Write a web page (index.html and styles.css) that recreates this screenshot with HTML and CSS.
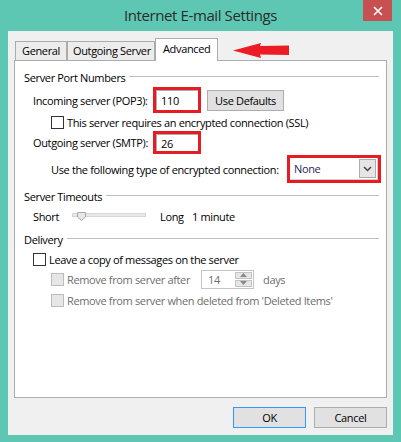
FILE: index.html
```html
<!DOCTYPE html>
<html>
<head>
<meta charset="utf-8">
<link rel="stylesheet" href="styles.css">
</head>
<body>
<div class="window">
  <div class="titlebar">
    <span class="spacer"></span>
    <span class="title">Internet E-mail Settings</span>
    <span class="close-cell">
      <span class="close">
        <svg width="10" height="10" viewBox="0 0 10 10"><path d="M1 1 L9 9 M9 1 L1 9" stroke="#fff" stroke-width="1.6" fill="none"/></svg>
      </span>
    </span>
  </div>
  <div class="body">
    <div class="tabs">
      <div class="tab tab-general">General</div>
      <div class="tab tab-outgoing">Outgoing Server</div>
      <div class="tab tab-active">Advanced</div>
      <svg class="arrow" width="57" height="15" viewBox="0 0 57 15"><polygon points="0,7.5 28,0 27,3 56,2.5 56,12 27,11.5 28,15" fill="#ED1C24"/></svg>
    </div>
    <div class="panel">
      <div class="group-title row-h1"><span>Server Port Numbers</span></div>

      <div class="row row-incoming">
        <span class="label-port">Incoming server (POP3):</span>
        <span class="mark mark-port"><span class="textbox">110</span></span>
        <span class="button btn-defaults">Use Defaults</span>
      </div>

      <div class="row row-ssl">
        <span class="checkbox"></span>
        <span class="cb-label">This server requires an encrypted connection (SSL)</span>
      </div>

      <div class="row row-outgoing">
        <span class="label-port">Outgoing server (SMTP):</span>
        <span class="mark mark-port mark-out"><span class="textbox">26</span></span>
      </div>

      <div class="row row-enc">
        <span class="label-enc">Use the following type of encrypted connection:</span>
        <span class="mark mark-enc">
          <span class="select">
            <span class="select-value">None</span>
            <span class="select-btn"><svg width="9" height="6" viewBox="0 0 9 6"><path d="M1 1 L4.5 4.5 L8 1" stroke="#444" stroke-width="1.5" fill="none"/></svg></span>
          </span>
        </span>
      </div>

      <div class="group-title row-h2"><span>Server Timeouts</span></div>

      <div class="row row-slider">
        <span class="slider-label">Short</span>
        <span class="track"><svg class="thumb" width="9" height="9" viewBox="0 0 9 9"><polygon points="0.5,0.5 8.5,0.5 8.5,5 4.5,8.5 0.5,5" fill="#E7E7E7" stroke="#A7A7A7"/></svg></span>
        <span class="slider-long">Long</span>
        <span>1 minute</span>
      </div>

      <div class="group-title row-h3"><span>Delivery</span></div>

      <div class="row row-leave">
        <span class="checkbox"></span>
        <span class="cb-label">Leave a copy of messages on the server</span>
      </div>

      <div class="row row-remove1 disabled">
        <span class="checkbox"></span>
        <span class="cb-label label-after">Remove from server after</span>
        <span class="spinner">
          <span class="spin-value">14</span>
          <span class="spin-btns">
            <span class="spin-btn"><svg width="7" height="4" viewBox="0 0 7 4"><polygon points="0,4 3.5,0 7,4" fill="#8A8A8A"/></svg></span>
            <span class="spin-btn"><svg width="7" height="4" viewBox="0 0 7 4"><polygon points="0,0 3.5,4 7,0" fill="#8A8A8A"/></svg></span>
          </span>
        </span>
        <span class="days">days</span>
      </div>

      <div class="row row-remove2 disabled">
        <span class="checkbox"></span>
        <span class="cb-label">Remove from server when deleted from 'Deleted Items'</span>
      </div>
    </div>
    <div class="actions">
      <span class="button action-btn btn-ok">OK</span>
      <span class="button action-btn">Cancel</span>
    </div>
  </div>
</div>
</body>
</html>
```

FILE: styles.css
```css
html, body {
  margin: 0;
  padding: 0;
}
body {
  background: #5DC7B3;
  font-family: "Open Sans", "Noto Sans", sans-serif;
  font-size: 11px;
  letter-spacing: -0.35px;
  color: #000;
  white-space: nowrap;
}
.window {
  width: 401px;
  height: 442px;
  display: flex;
  flex-direction: column;
  padding-bottom: 7px;
  box-sizing: border-box;
}
.titlebar {
  height: 31px;
  display: grid;
  grid-template-columns: 1fr auto 1fr;
  align-items: start;
}
.title {
  font-size: 15px;
  color: #2B2B2B;
  line-height: 20px;
  padding-top: 5px;
  letter-spacing: -0.4px;
}
.close-cell {
  justify-self: end;
  margin-right: 9px;
}
.close {
  width: 29px;
  height: 21px;
  background: #C75050;
  display: flex;
  align-items: center;
  justify-content: center;
}
.body {
  flex: 1;
  margin: 0 8px;
  background: #F0F0F0;
  padding: 7px 6px 0 6px;
  display: flex;
  flex-direction: column;
}
.tabs {
  display: flex;
  align-items: flex-end;
  height: 22px;
  padding-left: 1px;
}
.tab {
  height: 19px;
  box-sizing: border-box;
  border: 1px solid #ACACAC;
  border-bottom: none;
  background: #ECECEC;
  line-height: 18px;
  padding: 0 6px;
  flex: none;
}
.tab-general {
  width: 52px;
}
.tab-outgoing {
  width: 88px;
  padding-left: 5px;
}
.tab-active {
  width: 63px;
  height: 23px;
  margin-bottom: -1px;
  background: #fff;
  position: relative;
  z-index: 1;
  line-height: 20px;
  padding: 0 7px;
}
.arrow {
  align-self: center;
  margin-left: 15px;
  margin-top: 2px;
  flex: none;
}
.panel {
  height: 338px;
  box-sizing: border-box;
  border: 1px solid #ACACAC;
  background: #fff;
  padding: 0 7px 0 9px;
  display: flex;
  flex-direction: column;
}
.group-title {
  display: flex;
  align-items: center;
  height: 20px;
}
.group-title::after {
  content: "";
  flex: 1;
  height: 1px;
  background: #BDBDBD;
  margin-left: 4px;
  margin-top: -1px;
}
.row {
  display: flex;
  align-items: center;
  height: 20px;
}
.row > * {
  flex: none;
}
.row-h1 { margin-top: 6px; }
.row-incoming { height: 26px; padding-left: 9px; }
.row-ssl { margin-top: -1px; padding-left: 27px; }
.row-outgoing { height: 23px; margin-top: -1px; padding-left: 9px; }
.row-enc { height: 28px; margin-top: 1px; padding-left: 27px; }
.row-h2 { margin-top: 3px; }
.row-slider { padding-left: 9px; }
.row-h3 { margin-top: 3px; }
.row-leave { padding-left: 9px; }
.row-remove1 { padding-left: 27px; }
.row-remove2 { margin-top: 1px; padding-left: 27px; }

.label-port {
  width: 120px;
}
.mark {
  border: 3px solid #E51C23;
  box-sizing: border-box;
  display: flex;
}
.mark-port {
  width: 48px;
  height: 26px;
}
.mark-out {
  height: 23px;
}
.textbox {
  flex: 1;
  border: 1px solid #ABADB3;
  border-right: none;
  border-bottom: none;
  padding-left: 4px;
  display: flex;
  align-items: center;
}
.button {
  display: flex;
  align-items: center;
  justify-content: center;
  box-sizing: border-box;
  background: #E1E1E1;
  border: 1px solid #ADADAD;
}
.btn-defaults {
  width: 77px;
  height: 21px;
  margin-left: 6px;
}
.checkbox {
  width: 13px;
  height: 13px;
  box-sizing: border-box;
  border: 1px solid #333;
  background: #fff;
}
.cb-label {
  margin-left: 3px;
}
.label-enc {
  width: 236px;
}
.mark-enc {
  width: 94px;
  height: 28px;
}
.select {
  flex: 1;
  display: flex;
  align-items: center;
  justify-content: space-between;
  border: 1px solid #D0D0D0;
  border-left: none;
  border-top: none;
  padding: 0 1px 0 4px;
}
.select-value {
  color: #1F1F5C;
}
.select-btn {
  width: 17px;
  height: 19px;
  box-sizing: border-box;
  background: #E5E5E5;
  border: 1px solid #ACACAC;
  display: flex;
  align-items: center;
  justify-content: center;
}
.slider-label {
  width: 39px;
}
.track {
  position: relative;
  width: 74px;
  height: 4px;
  box-sizing: border-box;
  background: #E7EAEA;
  border: 1px solid #D6D6D6;
  margin-top: -3px;
}
.thumb {
  position: absolute;
  left: 4px;
  top: -2px;
}
.slider-long {
  margin-left: 14px;
  width: 32px;
}
.disabled {
  color: #6D6D6D;
}
.disabled .checkbox {
  background: #E6E6E6;
  border-color: #BCBCBC;
}
.label-after {
  width: 134px;
}
.spinner {
  width: 53px;
  height: 19px;
  box-sizing: border-box;
  border: 1px solid #C4C4C4;
  display: flex;
  background: #fff;
}
.spin-value {
  flex: 1;
  padding-left: 6px;
  display: flex;
  align-items: center;
}
.spin-btns {
  width: 17px;
  display: flex;
  flex-direction: column;
  padding: 1px;
  gap: 1px;
}
.spin-btn {
  flex: 1;
  background: #E6E6E6;
  border: 1px solid #C4C4C4;
  display: flex;
  align-items: center;
  justify-content: center;
}
.days {
  margin-left: 9px;
}
.actions {
  display: flex;
  justify-content: flex-end;
  gap: 8px;
  margin-top: 9px;
}
.action-btn {
  width: 73px;
  height: 21px;
}
.btn-ok {
  border-color: #3399FF;
}
```
